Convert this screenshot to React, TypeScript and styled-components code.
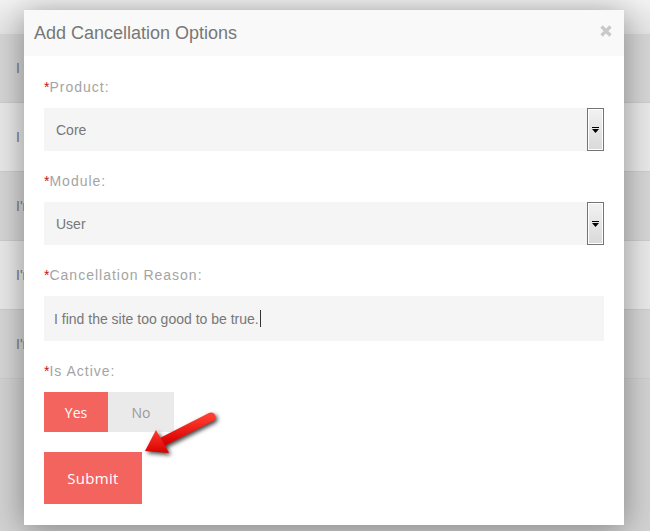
import styled, {createGlobalStyle} from "styled-components";

const GlobalStyle = createGlobalStyle`
  html, body {
    margin: 0;
    padding: 0;
    background: #ececec;
    font-family: "Liberation Sans", Arial, sans-serif;
  }
`;

const Page = styled.div`
  position: relative;
  width: 650px;
  height: 531px;
  overflow: hidden;
  background: #d2d2d2;
`;

const TopStrip = styled.div`
  height: 34px;
  background: linear-gradient(to bottom, #f2f2f2, #e4e4e4);
`;

const Row = styled.div<{ $shade: boolean }>`
  height: 69px;
  display: flex;
  align-items: center;
  padding-left: 16px;
  box-sizing: border-box;
  border-bottom: 1px solid #cdcdcd;
  background: ${p => (p.$shade ? "#d6d6d6" : "#e9e9e9")};
  color: #7a7a7a;
  font-size: 14px;
  white-space: nowrap;
`;

const Modal = styled.div`
  position: absolute;
  left: 24px;
  top: 10px;
  width: 600px;
  height: 515px;
  background: #fff;
  box-shadow: 0 4px 30px rgba(0, 0, 0, 0.38);
`;

const Header = styled.div`
  height: 46px;
  background: #f9f9f9;
  display: flex;
  align-items: center;
  justify-content: space-between;
  padding: 0 12px 0 10px;
`;

const Title = styled.h3`
  margin: 0;
  font-size: 18px;
  font-weight: normal;
  color: #777;
`;

const Close = styled.button`
  border: 0;
  background: none;
  padding: 0;
  width: 12px;
  height: 12px;
  display: flex;
  cursor: pointer;
  margin-bottom: 4px;
`;

const Body = styled.div`
  position: relative;
  padding: 21px 20px 20px;
`;

const Group = styled.div`
  margin-bottom: 20px;
`;

const Label = styled.label`
  display: block;
  height: 20px;
  line-height: 20px;
  margin-bottom: 11px;
  font-size: 14px;
  letter-spacing: 1px;
  color: #a4a4a4;
`;

const Star = styled.span`
  color: #c4141a;
  letter-spacing: 0;
`;

const SelectBox = styled.div`
  height: 43px;
  background: #f5f5f5;
  display: flex;
  align-items: center;
  justify-content: space-between;
  padding-left: 12px;
  font-size: 14px;
  color: #777;
`;

const DropButton = styled.span`
  width: 17px;
  height: 43px;
  box-sizing: border-box;
  border: 1px solid #747474;
  box-shadow: inset 1px 1px 0 #fff, inset -1px -1px 0 #fff;
  background: linear-gradient(to bottom, #f2f2f2, #d9d9d9);
  display: flex;
  align-items: center;
  justify-content: center;
`;

const TextInput = styled.div`
  height: 45px;
  background: #f5f5f5;
  display: flex;
  align-items: center;
  padding-left: 10px;
  font-size: 14px;
  color: #777;
`;

const Caret = styled.span`
  display: inline-block;
  width: 1px;
  height: 17px;
  background: #333;
  margin-left: 1px;
`;

const Toggle = styled.div`
  display: flex;
  margin-top: 1px;
`;

const ToggleButton = styled.button<{ $active: boolean; $w: number }>`
  width: ${p => p.$w}px;
  height: 40px;
  border: 0;
  padding: 0;
  font-family: "Open Sans", sans-serif;
  font-size: 14px;
  background: ${p => (p.$active ? "#f4645f" : "#eaeaea")};
  color: ${p => (p.$active ? "#fff" : "#9a9a9a")};
`;

const Submit = styled.button`
  width: 98px;
  height: 52px;
  border: 0;
  padding: 0;
  background: #f4645f;
  color: #fff;
  font-family: "Open Sans", sans-serif;
  font-size: 15px;
  letter-spacing: 0.3px;
`;

const Pointer = styled.svg`
  position: absolute;
  left: 86px;
  top: 349px;
  overflow: visible;
  filter: drop-shadow(2px 2px 2px rgba(0, 0, 0, 0.75));
`;

const rows = [
  "I find the site too good to be true.",
  "I can't afford it anymore.",
  "I'm not using it enough.",
  "I'm switching to another service.",
  "I'm having technical issues.",
];

export default function App() {
  return (
    <Page>
      <GlobalStyle />
      <TopStrip />
      {rows.map((r, i) => (
        <Row key={r} $shade={i % 2 === 0}>{r}</Row>
      ))}

      <Modal>
        <Header>
          <Title>Add Cancellation Options</Title>
          <Close aria-label="close">
            <svg width="12" height="12" viewBox="0 0 12 12">
              <path d="M1.5 1.5L10.5 10.5M10.5 1.5L1.5 10.5" stroke="#c9c9c9" strokeWidth="3.2" />
            </svg>
          </Close>
        </Header>
        <Body>
          <Group>
            <Label><Star>*</Star>Product:</Label>
            <SelectBox>
              Core
              <DropButton>
                <svg width="7" height="6" viewBox="0 0 7 6">
                  <path d="M0 0H7V1H0Z M0 2H7L3.5 6Z" fill="#000" />
                </svg>
              </DropButton>
            </SelectBox>
          </Group>
          <Group>
            <Label><Star>*</Star>Module:</Label>
            <SelectBox>
              User
              <DropButton>
                <svg width="7" height="6" viewBox="0 0 7 6">
                  <path d="M0 0H7V1H0Z M0 2H7L3.5 6Z" fill="#000" />
                </svg>
              </DropButton>
            </SelectBox>
          </Group>
          <Group>
            <Label><Star>*</Star>Cancellation Reason:</Label>
            <TextInput>
              I find the site too good to be true.<Caret />
            </TextInput>
          </Group>
          <Group>
            <Label><Star>*</Star>Is Active:</Label>
            <Toggle>
              <ToggleButton $active $w={64}>Yes</ToggleButton>
              <ToggleButton $active={false} $w={66}>No</ToggleButton>
            </Toggle>
          </Group>
          <Submit>Submit</Submit>

          <Pointer width="110" height="70" viewBox="0 0 110 70">
            <defs>
              <linearGradient id="ar" x1="0" y1="0" x2="0" y2="1">
                <stop offset="0" stopColor="#ff3b2e" />
                <stop offset="1" stopColor="#d80000" />
              </linearGradient>
            </defs>
            <line x1="101" y1="12" x2="50" y2="38" stroke="url(#ar)" strokeWidth="9" strokeLinecap="round" />
            <path d="M35 46 L46 25 L59 48 Z" fill="url(#ar)" />
          </Pointer>
        </Body>
      </Modal>
    </Page>
  );
}
